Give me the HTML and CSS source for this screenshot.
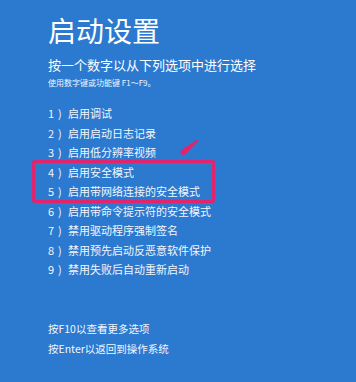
FILE: index.html
```html
<!DOCTYPE html>
<html lang="zh-CN">
<head>
<meta charset="utf-8">
<title>启动设置</title>
<link rel="stylesheet" href="styles.css">
</head>
<body>
<div class="page">
  <h1 class="title">启动设置</h1>
  <p class="sub">按一个数字以从下列选项中进行选择</p>
  <p class="hint">使用数字键或功能键 F1～F9。</p>
  <div class="listwrap">
    <ol class="list">
      <li><span class="n">1</span><span class="p">)</span>启用调试</li>
      <li><span class="n">2</span><span class="p">)</span>启用启动日志记录</li>
      <li><span class="n">3</span><span class="p">)</span>启用低分辨率视频</li>
      <li><span class="n">4</span><span class="p">)</span>启用安全模式</li>
      <li><span class="n">5</span><span class="p">)</span>启用带网络连接的安全模式</li>
      <li><span class="n">6</span><span class="p">)</span>启用带命令提示符的安全模式</li>
      <li><span class="n">7</span><span class="p">)</span>禁用驱动程序强制签名</li>
      <li><span class="n">8</span><span class="p">)</span>禁用预先启动反恶意软件保护</li>
      <li><span class="n">9</span><span class="p">)</span>禁用失败后自动重新启动</li>
    </ol>
    <div class="mark"></div>
    <svg class="arrow" width="22" height="20" viewBox="0 0 22 20"><path d="M19.4 2.4 L20.6 3.6 L7.6 16.9 A2.9 2.9 0 0 1 3.4 12.7 Z" fill="#e0246e"/></svg>
  </div>
  <div class="foot">
    <p>按F10以查看更多选项</p>
    <p>按Enter以返回到操作系统</p>
  </div>
</div>
</body>
</html>
```
FILE: styles.css
```css
html, body {
  margin: 0;
  padding: 0;
}
body {
  width: 356px;
  height: 382px;
  overflow: hidden;
  background: #2c79d0;
  font-family: "Noto Sans CJK SC", "Noto Sans", sans-serif;
  color: #f2f6fc;
}
.page {
  padding: 14px 0 0 48px;
}
.title {
  margin: 0;
  font-size: 28px;
  line-height: 32px;
  font-weight: 400;
  color: #ffffff;
}
.sub {
  margin: 11px 0 0;
  font-size: 13px;
  line-height: 16px;
  color: #ffffff;
}
.hint {
  margin: 5px 0 0;
  font-size: 8px;
  line-height: 10px;
}
.listwrap {
  position: relative;
  margin-top: 16px;
}
.list {
  list-style: none;
  margin: 0;
  padding: 0;
}
.list li {
  font-size: 11px;
  line-height: 19.5px;
  display: flex;
}
.n {
  width: 10px;
}
.p {
  width: 10px;
}
.mark {
  position: absolute;
  left: -16px;
  top: 56px;
  width: 177px;
  height: 37px;
  border: 3px solid #e0246e;
  border-radius: 3px;
}
.arrow {
  position: absolute;
  left: 130px;
  top: 33px;
}
.foot {
  margin-top: 39px;
}
.foot p {
  margin: 0;
  font-size: 10.5px;
  line-height: 20px;
}
```
